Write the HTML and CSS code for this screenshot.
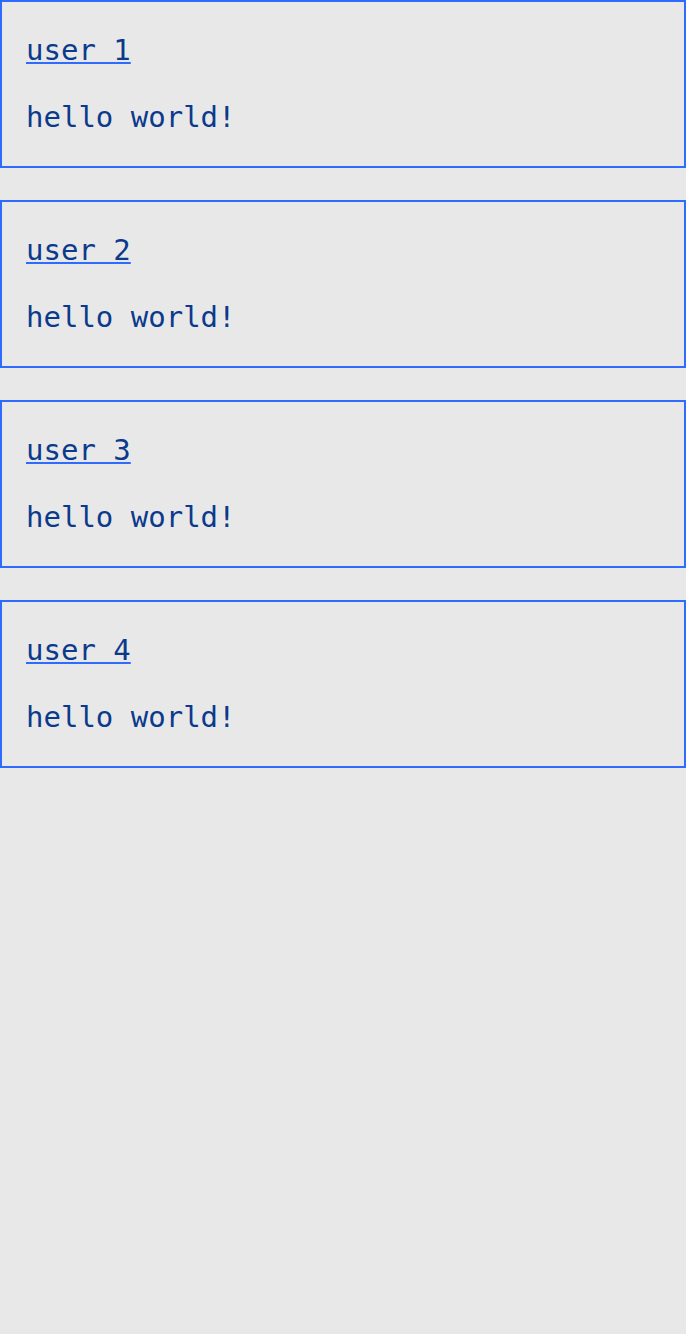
FILE: index.html
```html
<!DOCTYPE html>
<html>
<head>
<meta charset="utf-8">
<link rel="stylesheet" href="styles.css">
</head>
<body>
<div class="list">
  <div class="card"><a class="user" href="#">user 1</a><p class="msg">hello world!</p></div>
  <div class="card"><a class="user" href="#">user 2</a><p class="msg">hello world!</p></div>
  <div class="card"><a class="user" href="#">user 3</a><p class="msg">hello world!</p></div>
  <div class="card"><a class="user" href="#">user 4</a><p class="msg">hello world!</p></div>
</div>
</body>
</html>
```
FILE: styles.css
```css
html, body {
  margin: 0;
  background: #e8e8e8;
}
body {
  font-family: "DejaVu Sans Mono", monospace;
  font-size: 29px;
  color: #0b3a8c;
}
.list {
  display: flex;
  flex-direction: column;
  gap: 32px;
}
.card {
  box-sizing: border-box;
  height: 168px;
  border: 2px solid #2f6bff;
  padding: 32px 24px 0;
  display: flex;
  flex-direction: column;
  align-items: flex-start;
  gap: 35px;
}
.user {
  color: #0b3a8c;
  line-height: 32px;
  text-decoration: underline;
  text-decoration-color: #2f6bff;
  text-decoration-thickness: 2px;
  text-underline-offset: 2px;
}
.msg {
  margin: 0;
  line-height: 32px;
}
```
